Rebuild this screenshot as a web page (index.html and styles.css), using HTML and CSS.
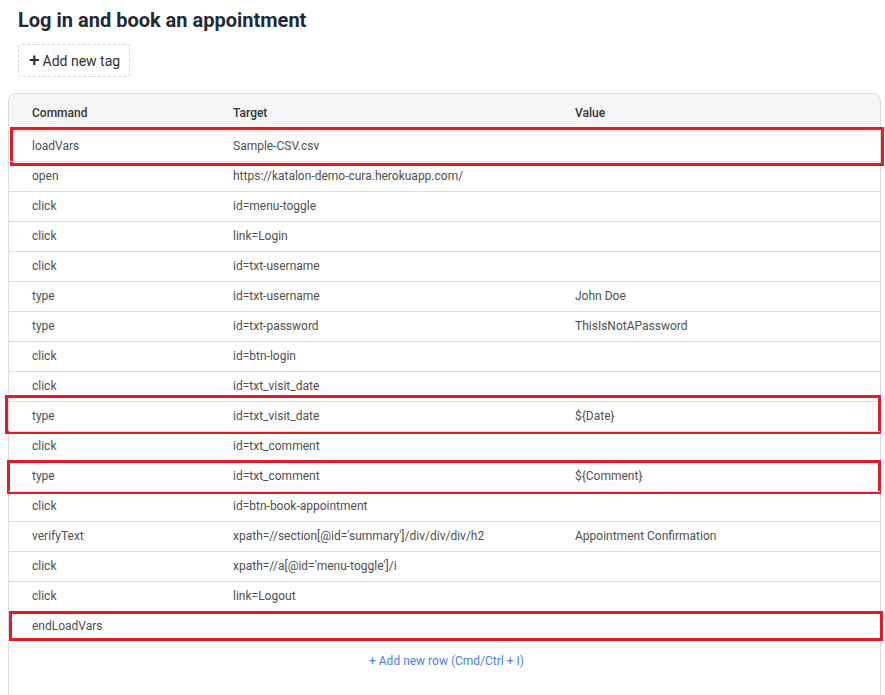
FILE: index.html
```html
<!DOCTYPE html>
<html>
<head>
<meta charset="utf-8">
<link rel="stylesheet" href="styles.css">
</head>
<body>
<div class="page">
  <h1 class="title">Log in and book an appointment</h1>
  <div class="tags">
    <button class="tag-btn"><span class="plus">+</span>Add new tag</button>
  </div>
  <div class="table">
    <div class="row head">
      <div>Command</div><div>Target</div><div>Value</div>
    </div>
    <div class="row"><div>loadVars</div><div>Sample-CSV.csv</div><div></div><span class="mark m1"></span></div>
    <div class="row"><div>open</div><div>https://katalon-demo-cura.herokuapp.com/</div><div></div></div>
    <div class="row"><div>click</div><div>id=menu-toggle</div><div></div></div>
    <div class="row"><div>click</div><div>link=Login</div><div></div></div>
    <div class="row"><div>click</div><div>id=txt-username</div><div></div></div>
    <div class="row"><div>type</div><div>id=txt-username</div><div>John Doe</div></div>
    <div class="row"><div>type</div><div>id=txt-password</div><div>ThisIsNotAPassword</div></div>
    <div class="row"><div>click</div><div>id=btn-login</div><div></div></div>
    <div class="row"><div>click</div><div>id=txt_visit_date</div><div></div></div>
    <div class="row"><div>type</div><div>id=txt_visit_date</div><div>${Date}</div><span class="mark m2"></span></div>
    <div class="row"><div>click</div><div>id=txt_comment</div><div></div></div>
    <div class="row"><div>type</div><div>id=txt_comment</div><div>${Comment}</div><span class="mark m3"></span></div>
    <div class="row"><div>click</div><div>id=btn-book-appointment</div><div></div></div>
    <div class="row"><div>verifyText</div><div>xpath=//section[@id='summary']/div/div/div/h2</div><div>Appointment Confirmation</div></div>
    <div class="row"><div>click</div><div>xpath=//a[@id='menu-toggle']/i</div><div></div></div>
    <div class="row"><div>click</div><div>link=Logout</div><div></div></div>
    <div class="row"><div>endLoadVars</div><div></div><div></div><span class="mark m4"></span></div>
    <div class="add-row"><a class="add-link">+ Add new row (Cmd/Ctrl + I)</a></div>
  </div>
</div>
</body>
</html>
```
FILE: styles.css
```css
html, body {
  margin: 0;
  padding: 0;
  background: #ffffff;
}
body {
  font-family: Roboto, "Liberation Sans", Arial, sans-serif;
  color: #4a4a4a;
}
.page {
  padding: 0 4px 0 8px;
}
.title {
  margin: 0;
  padding: 8px 0 0 10px;
  font-size: 20px;
  line-height: 24px;
  font-weight: 700;
  color: #1f2a37;
}
.tags {
  padding: 12px 0 0 10px;
}
.tag-btn {
  display: flex;
  align-items: center;
  height: 33px;
  width: 112px;
  padding: 0 0 0 10px;
  box-sizing: border-box;
  border: 1px dashed #d4d4d4;
  border-radius: 4px;
  background: #fff;
  font-family: Roboto, "Liberation Sans", Arial, sans-serif;
  font-size: 14px;
  color: #2b2f36;
  cursor: pointer;
}
.plus {
  font-size: 19px;
  font-weight: 500;
  line-height: 1;
  margin-right: 3px;
  margin-top: -2px;
}
.table {
  margin-top: 16px;
  width: 873px;
  height: 640px;
  box-sizing: border-box;
  border: 1px solid #dcdcdc;
  border-radius: 8px;
  background: #fff;
}
.row {
  position: relative;
  display: grid;
  grid-template-columns: 201px 342px 1fr;
  padding-left: 23px;
  padding-bottom: 1px;
  height: 30px;
  align-items: center;
  border-top: 1px solid #dcdcdc;
  box-sizing: border-box;
  font-size: 12px;
  color: #4f4f4f;
}
.row.head {
  height: 37px;
  border-top: none;
  background: #f6f6f6;
  border-radius: 8px 8px 0 0;
  color: #333;
  font-weight: 500;
  padding-top: 1px;
  padding-bottom: 0;
}
.row > div {
  white-space: nowrap;
}
.row:nth-last-child(2) {
  border-bottom: 1px solid #dcdcdc;
}
.mark {
  position: absolute;
  border: 3px solid #e21b24;
  box-sizing: border-box;
  pointer-events: none;
}
.m1 { top: -5px; bottom: -5px; left: 1px; right: -4px; }
.m2 { top: -7px; bottom: -3px; left: -4px; right: -1px; }
.m3 { top: -2px; bottom: -3px; left: -2px; right: -1px; }
.m4 { top: -1px; bottom: -1px; left: 0; right: -3px; }
.add-row {
  display: flex;
  justify-content: center;
  padding-top: 13px;
}
.add-link {
  font-size: 12px;
  color: #4b7bf5;
  cursor: pointer;
  padding-left: 4px;
}
```
